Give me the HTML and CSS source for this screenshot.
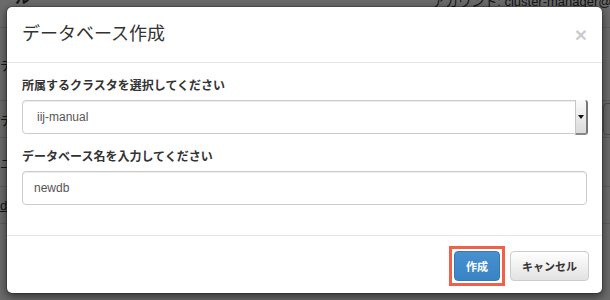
FILE: index.html
```html
<!DOCTYPE html>
<html lang="ja">
<head>
  <meta charset="UTF-8">
  <meta name="viewport" content="width=device-width, initial-scale=1.0">
  <title>データベース作成</title>
  <link rel="stylesheet" href="styles.css">
</head>
<body>
  <div class="page">
    <div class="topbar">
      <span class="brand">ツール</span>
      <span class="account">アカウント: cluster-manager@iij.ad.jp</span>
    </div>
    <div class="page-row page-title">テ</div>
    <div class="page-row">
      <span>デ</span>
      <span class="page-btn"></span>
    </div>
    <div class="page-row page-row-tall">ユ</div>
    <div class="page-row"><a href="#">d</a></div>
  </div>

  <div class="backdrop"></div>

  <div class="modal">
    <div class="modal-header">
      <h4 class="modal-title">データベース作成</h4>
      <button class="close">&times;</button>
    </div>
    <div class="modal-body">
      <div class="form-group">
        <label>所属するクラスタを選択してください</label>
        <div class="select">
          <span class="select-value">iij-manual</span>
          <span class="select-arrow"></span>
        </div>
      </div>
      <div class="form-group">
        <label for="dbname">データベース名を入力してください</label>
        <input type="text" class="form-control" id="dbname" value="newdb">
      </div>
    </div>
    <div class="modal-footer">
      <span class="highlight">
        <button class="btn btn-primary">作成</button>
      </span>
      <button class="btn btn-default">キャンセル</button>
    </div>
  </div>
</body>
</html>
```

FILE: styles.css
```css
body {
  font-family: "Liberation Sans", Arial, "Noto Sans CJK JP", sans-serif;
  margin: 0;
  width: 610px;
  height: 300px;
  overflow: hidden;
  position: relative;
  background-color: #fff;
  color: #333;
}
.page {
  font-size: 13px;
}
.topbar {
  display: flex;
  justify-content: space-between;
  height: 27px;
  border-bottom: 1px solid #ddd;
}
.brand {
  margin: -11px 0 0 -15px;
  font-size: 15px;
  font-weight: bold;
  line-height: 18px;
}
.account {
  margin: -6px -42px 0 0;
  white-space: nowrap;
  line-height: 16px;
}
.page-row {
  display: flex;
  justify-content: space-between;
  align-items: center;
  height: 36px;
  border-bottom: 1px solid #ddd;
}
.page-title {
  height: 72px;
}
.page-row-tall {
  height: 48px;
}
.page-btn {
  width: 40px;
  height: 30px;
  margin-right: -35px;
  border: 1px solid #bbb;
  border-radius: 4px;
}
.page-row a {
  color: #333;
}
.backdrop {
  position: absolute;
  top: 0;
  left: 0;
  right: 0;
  bottom: 0;
  background-color: rgba(0, 0, 0, 0.58);
}
.modal {
  position: absolute;
  top: 6px;
  left: 6px;
  width: 597px;
  box-sizing: border-box;
  background-color: #fff;
  background-clip: padding-box;
  border: 1px solid rgba(0, 0, 0, 0.2);
  border-radius: 6px;
  box-shadow: 0 3px 9px rgba(0, 0, 0, 0.5);
}
.modal-header {
  display: flex;
  justify-content: space-between;
  align-items: center;
  padding: 15px;
  border-bottom: 1px solid #e5e5e5;
}
.modal-title {
  margin: 0;
  font-size: 18px;
  font-weight: normal;
  line-height: 25px;
  color: #333;
}
.close {
  padding: 0;
  border: 0;
  background: none;
  font-family: "Liberation Sans", Arial, sans-serif;
  font-size: 21px;
  font-weight: bold;
  line-height: 1;
  color: #000;
  opacity: 0.2;
}
.modal-body {
  padding: 15px;
}
.form-group {
  margin-bottom: 15px;
}
.form-group label {
  display: block;
  margin-bottom: 5px;
  font-size: 12px;
  font-weight: bold;
  line-height: 17px;
}
.select {
  display: flex;
  height: 34px;
  box-sizing: border-box;
  border: 1px solid #ccc;
  border-radius: 4px;
  box-shadow: inset 0 1px 1px rgba(0, 0, 0, 0.075);
}
.select-value {
  flex: 1;
  padding-left: 14px;
  font-size: 12px;
  line-height: 32px;
  color: #555;
}
.select-arrow {
  display: flex;
  align-items: center;
  justify-content: center;
  width: 10px;
  margin: -1px -2px -2px 0;
  border-left: 1px solid #c6c6c6;
  border-right: 2px solid #777;
  border-bottom: 2px solid #888;
  border-radius: 0 3px 3px 0;
  background: linear-gradient(#fbfbfb, #dadada);
}
.select-arrow::after {
  content: "";
  border-left: 3px solid transparent;
  border-right: 3px solid transparent;
  border-top: 4px solid #111;
}
.form-control {
  display: block;
  width: 100%;
  height: 34px;
  box-sizing: border-box;
  padding: 0 11px;
  border: 1px solid #ccc;
  border-radius: 4px;
  box-shadow: inset 0 1px 1px rgba(0, 0, 0, 0.075);
  font-family: "Liberation Sans", Arial, sans-serif;
  font-size: 12px;
  color: #555;
}
.modal-footer {
  display: flex;
  justify-content: flex-end;
  align-items: center;
  gap: 5px;
  padding: 10px 13px 7px;
  border-top: 1px solid #e5e5e5;
}
.highlight {
  display: flex;
  padding: 2px;
  border: 3px solid #f0604a;
}
.btn {
  height: 30px;
  padding: 0 11px;
  border: 1px solid #ccc;
  border-radius: 4px;
  font-family: "Noto Sans CJK JP", sans-serif;
  font-size: 11px;
  font-weight: bold;
  cursor: pointer;
}
.btn-primary {
  color: #fff;
  border-color: #3479b8;
  background: linear-gradient(#4690d0, #3a84c5);
}
.btn-default {
  color: #333;
  background: linear-gradient(#fff, #e2e2e2);
}
```
